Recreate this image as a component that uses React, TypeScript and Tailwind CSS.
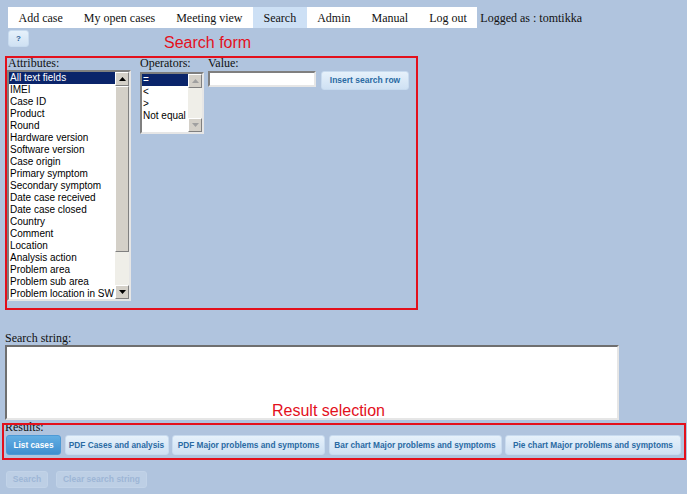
import React from "react";

const navItems = ["Add case", "My open cases", "Meeting view", "Search", "Admin", "Manual", "Log out"];

const attributes = [
  "All text fields",
  "IMEI",
  "Case ID",
  "Product",
  "Round",
  "Hardware version",
  "Software version",
  "Case origin",
  "Primary symptom",
  "Secondary symptom",
  "Date case received",
  "Date case closed",
  "Country",
  "Comment",
  "Location",
  "Analysis action",
  "Problem area",
  "Problem sub area",
  "Problem location in SW",
];

const operators = ["=", "<", ">", "Not equal"];

const results = [
  { label: "List cases", w: "w-[55px]", active: true },
  { label: "PDF Cases and analysis", w: "w-[104px]" },
  { label: "PDF Major problems and symptoms", w: "w-[153px]" },
  { label: "Bar chart Major problems and symptoms", w: "w-[173px]" },
  { label: "Pie chart Major problems and symptoms", w: "w-[176px]" },
];

function Arrow({ up, disabled }: { up?: boolean; disabled?: boolean }) {
  return (
    <div className="flex h-[14px] w-[14px] shrink-0 items-center justify-center border border-t-white border-l-white border-r-[#808080] border-b-[#808080] bg-[#d4d0c8]">
      <svg width="7" height="4" viewBox="0 0 7 4">
        <path d={up ? "M0 4 L3.5 0 L7 4 Z" : "M0 0 L3.5 4 L7 0 Z"} fill={disabled ? "#a0a0a0" : "#000"} />
      </svg>
    </div>
  );
}

function Listbox({
  items,
  height,
  width,
  thumb,
}: {
  items: string[];
  height: string;
  width: string;
  thumb?: boolean;
}) {
  return (
    <div
      className={`flex ${height} ${width} border-2 border-t-[#7f7f7f] border-l-[#7f7f7f] border-r-[#e6e6e6] border-b-[#e6e6e6] bg-white font-['Liberation_Sans',Arial,sans-serif] text-[10px] leading-[12px] text-black`}
    >
      <div className="flex-1 overflow-hidden">
        {items.map((it, i) => (
          <div key={it} className={`pl-[1px] ${i === 0 ? "bg-[#0a246a] text-white" : ""}`}>
            {it}
          </div>
        ))}
      </div>
      <div className="flex w-[14px] flex-col bg-[#efeee8]">
        <Arrow up disabled={!thumb} />
        <div className="flex flex-1 flex-col">
          {thumb && (
            <div className="h-[166px] border border-t-white border-l-white border-r-[#808080] border-b-[#808080] bg-[#d4d0c8]" />
          )}
        </div>
        <Arrow disabled={!thumb} />
      </div>
    </div>
  );
}

export default function App() {
  return (
    <div className="relative h-[494px] w-[687px] overflow-hidden bg-[#b0c4de] pt-[7px] font-['Liberation_Serif','Times_New_Roman',serif] text-[12px] text-[#111]">
      {/* top navigation */}
      <div className="ml-2 flex h-[21px] items-center">
        <nav className="flex h-full bg-white">
          {navItems.map((n) => (
            <span
              key={n}
              className={`flex items-center px-[10.5px] ${n === "Search" ? "bg-[#cde0f5]" : ""}`}
            >
              {n}
            </span>
          ))}
        </nav>
        <span className="ml-[3px]">Logged as : tomtikka</span>
      </div>

      <button className="ml-2 mt-[2px] flex h-[17px] w-[21px] items-center justify-center rounded-[3px] border border-[#c8dbef] bg-gradient-to-b from-[#e6f1fb] to-[#cfe1f3] font-['Liberation_Sans',Arial,sans-serif] text-[8px] font-bold text-[#2a5f96]">
        ?
      </button>

      {/* search form */}
      <div className="ml-[7px] mt-[9px] flex h-[253px]">
        <div className="flex flex-col">
          <div className="h-[14px] pl-[1px] leading-[14px]">Attributes:</div>
          <Listbox items={attributes} height="h-[231px]" width="w-[124px]" thumb />
        </div>
        <div className="ml-[9px] flex flex-col">
          <div className="h-[14px] leading-[14px]">Operators:</div>
          <div className="mt-[2px]">
            <Listbox items={operators} height="h-[62px]" width="w-[64px]" />
          </div>
        </div>
        <div className="ml-[4px] flex flex-col">
          <div className="h-[14px] leading-[14px]">Value:</div>
          <div className="mt-[1px] flex items-start">
            <input className="h-[16px] w-[108px] border-2 border-t-[#7f7f7f] border-l-[#7f7f7f] border-r-[#e6e6e6] border-b-[#e6e6e6] bg-white outline-none" />
            <button className="ml-[5px] h-[19px] w-[88px] rounded-[3px] border border-[#c8dbef] bg-gradient-to-b from-[#e6f1fb] to-[#cfe1f3] font-['Liberation_Sans',Arial,sans-serif] text-[8.5px] font-bold text-[#2a6aa3]">
              Insert search row
            </button>
          </div>
        </div>
      </div>

      {/* search string */}
      <div className="ml-[5px] mt-[22px] h-[14px] leading-[14px]">Search string:</div>
      <textarea className="ml-[5px] block h-[75px] w-[614px] resize-none border-2 border-t-[#6f6f6f] border-l-[#6f6f6f] border-r-[#e6e6e6] border-b-[#e6e6e6] bg-white outline-none" />

      {/* results */}
      <div className="ml-[5px] h-[15px] leading-[15px]">Results:</div>
      <div className="ml-[6px] flex h-[20px] w-[675px] justify-between font-['Liberation_Sans',Arial,sans-serif] text-[8.3px] font-bold">
        {results.map((r) => (
          <button
            key={r.label}
            className={`${r.w} h-full rounded-[3px] border ${
              r.active
                ? "border-[#4d9ad6] bg-gradient-to-b from-[#62aee3] to-[#3f8fd0] text-white"
                : "border-[#c8dbef] bg-gradient-to-b from-[#e6f1fb] to-[#cfe1f3] text-[#2a6aa3]"
            }`}
          >
            {r.label}
          </button>
        ))}
      </div>

      <div className="ml-[6px] mt-[16px] flex gap-[8px] font-['Liberation_Sans',Arial,sans-serif] text-[8.5px] font-bold text-[#9db6d6]">
        <button className="h-[17px] w-[42px] rounded-[3px] border border-[#c2d3e8] bg-[#bdcfe5]">Search</button>
        <button className="h-[17px] w-[91px] rounded-[3px] border border-[#c2d3e8] bg-[#bdcfe5]">Clear search string</button>
      </div>

      {/* annotation overlays */}
      <div className="pointer-events-none absolute left-[5px] top-[56px] h-[254px] w-[413px] border-2 border-[#e3101c]" />
      <div className="pointer-events-none absolute left-[164px] top-[34px] font-['Liberation_Sans',Arial,sans-serif] text-[16px] leading-[18px] text-[#e3101c]">
        Search form
      </div>
      <div className="pointer-events-none absolute left-[2px] top-[423px] h-[37px] w-[684px] border-2 border-[#e3101c]" />
      <div className="pointer-events-none absolute left-[272px] top-[402px] font-['Liberation_Sans',Arial,sans-serif] text-[16px] leading-[18px] text-[#e3101c]">
        Result selection
      </div>
    </div>
  );
}
